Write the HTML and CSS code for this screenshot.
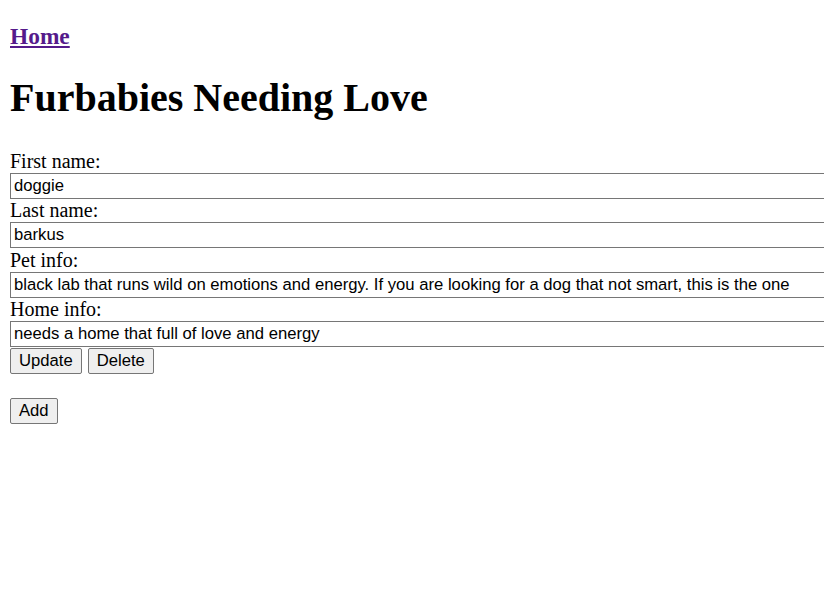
FILE: index.html
```html
<!DOCTYPE html>
<html>
<head>
<meta charset="utf-8">
<title>Furbabies</title>
<link rel="stylesheet" href="styles.css">
</head>
<body>
<h3 class="nav"><a class="home-link" href="#">Home</a></h3>
<h1 class="title">Furbabies Needing Love</h1>
<form class="pet-form">
  <label class="field-label">First name:</label>
  <input class="field-input" type="text" value="doggie">
  <label class="field-label">Last name:</label>
  <input class="field-input" type="text" value="barkus">
  <label class="field-label">Pet info:</label>
  <input class="field-input" type="text" value="black lab that runs wild on emotions and energy. If you are looking for a dog that not smart, this is the one">
  <label class="field-label">Home info:</label>
  <input class="field-input" type="text" value="needs a home that full of love and energy">
  <div class="actions"><button type="button" class="btn">Update</button><button type="button" class="btn">Delete</button></div>
  <div class="actions add-row"><button type="button" class="btn">Add</button></div>
</form>
</body>
</html>
```

FILE: styles.css
```css
html {
  overflow: hidden;
}
body {
  margin: 10px 0 10px 10px;
  font-family: "Liberation Serif", "Times New Roman", serif;
  font-size: 20px;
  color: #000;
  background: #fff;
}
.nav {
  font-size: 23.4px;
  line-height: 27px;
  margin: 13.4px 0 23.4px;
  font-weight: bold;
}
.home-link {
  color: #551a8b;
  text-decoration: underline;
}
.title {
  font-size: 40px;
  line-height: 46px;
  margin: 24.8px 0 28.8px;
  font-weight: bold;
}
.pet-form {
  margin: 0;
}
.field-label {
  display: block;
  line-height: 23px;
}
.field-input {
  display: block;
  box-sizing: border-box;
  width: 100%;
  height: 26px;
  font-family: "Liberation Sans", Arial, sans-serif;
  font-size: 16.67px;
  padding: 0 3px;
  border: 1px solid #767676;
  border-right-width: 0;
  border-radius: 0;
  color: #000;
  background: #fff;
  margin: 0 0 0.5px;
}
.actions {
  display: flex;
  gap: 6px;
}
.add-row {
  margin-top: 24px;
}
.btn {
  box-sizing: border-box;
  height: 26px;
  font-family: "Liberation Sans", Arial, sans-serif;
  font-size: 16.67px;
  padding: 0 8px;
  border: 1px solid #767676;
  border-radius: 2px;
  background: #efefef;
  color: #000;
  margin: 0;
}
```
